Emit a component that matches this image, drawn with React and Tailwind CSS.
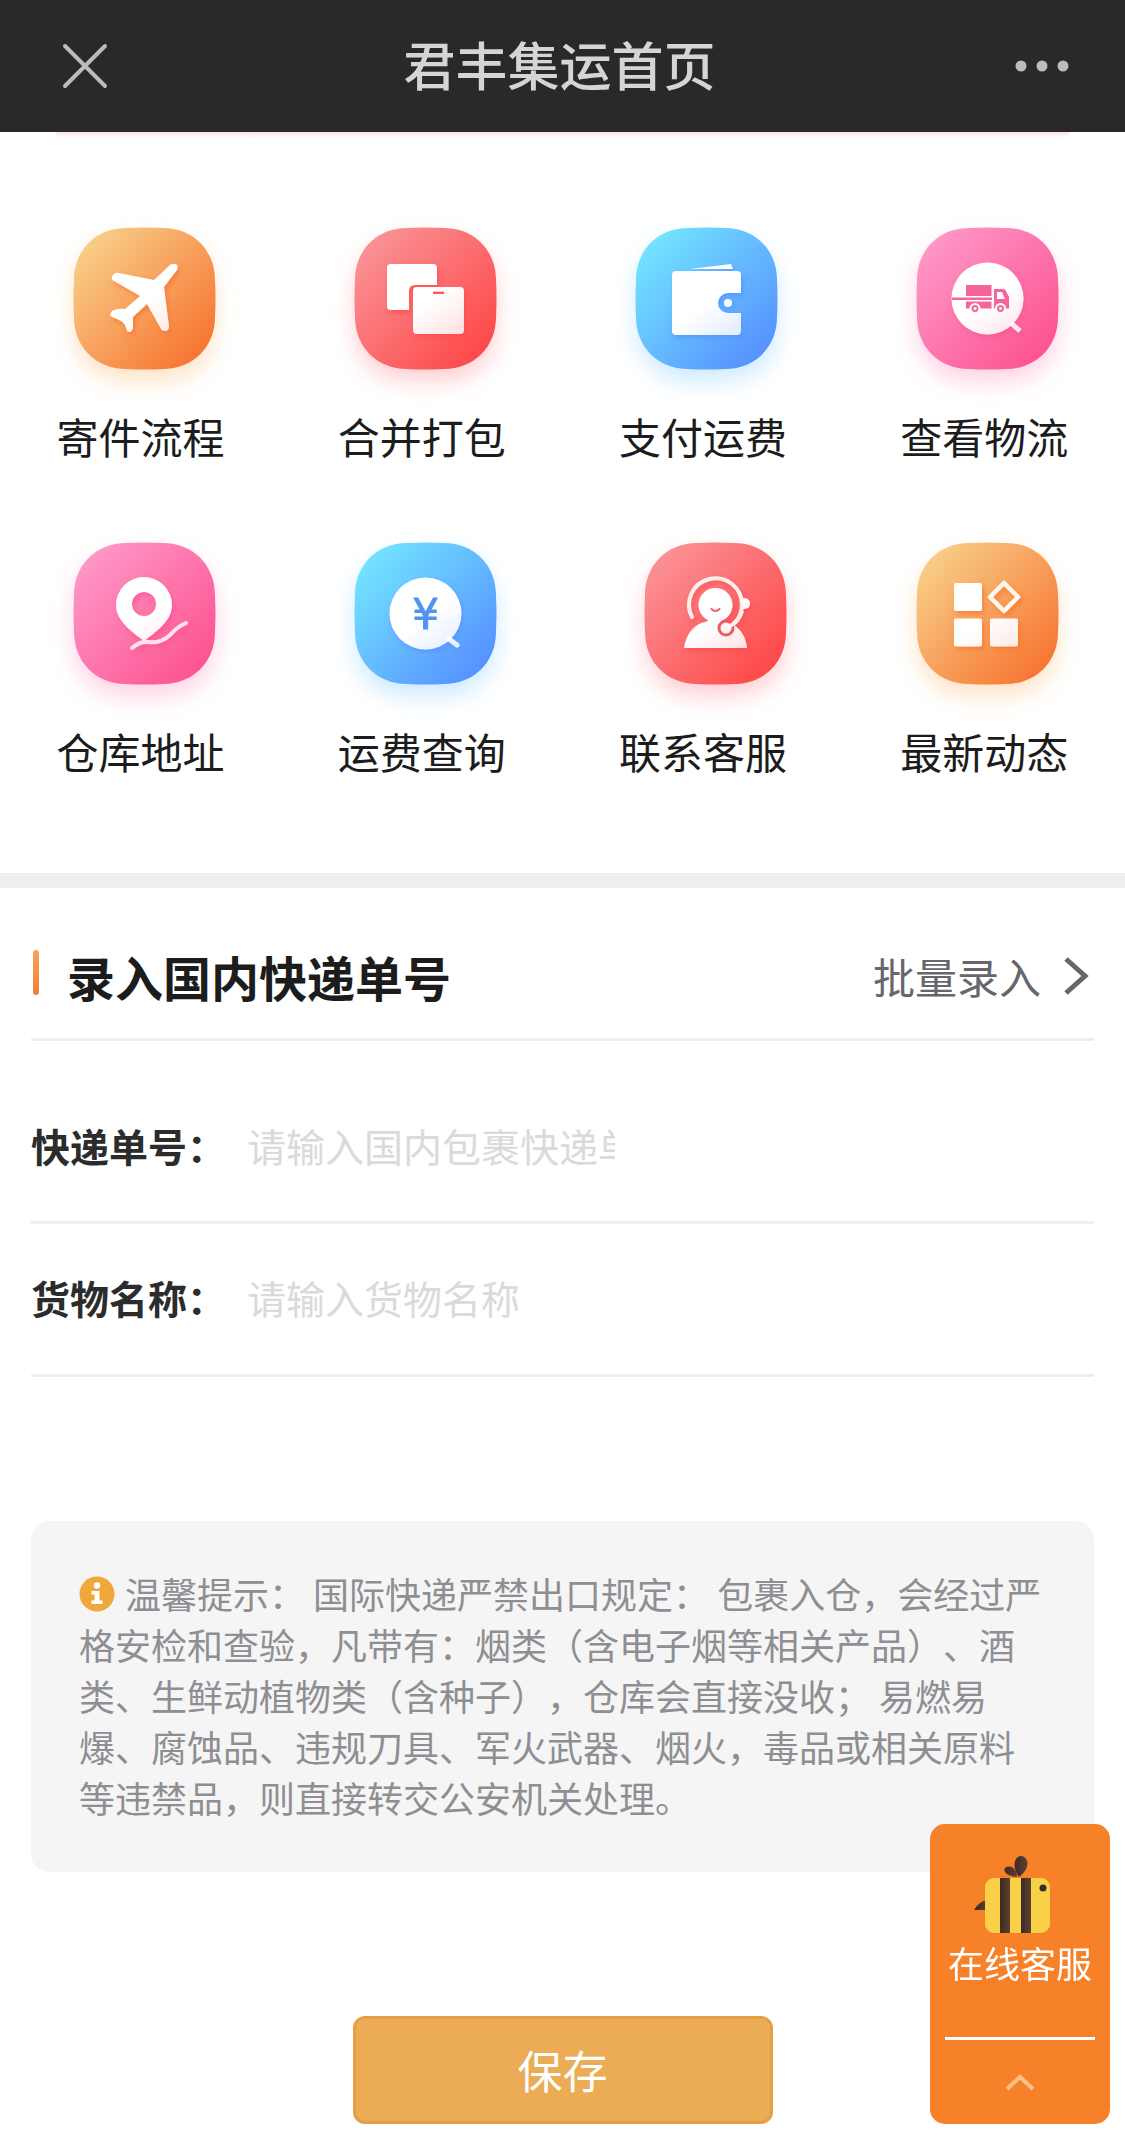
import { useState } from 'react';

const TILE_PATH = 'M0 52C0 22 22 0 52 0Q70.5 -1 89 0C119 0 141 22 141 52Q142 70.5 141 89C141 119 119 141 89 141Q70.5 142 52 141C22 141 0 119 0 89Q-1 70.5 0 52Z';

const THEMES = {
  orange: { from: '#f7cc86', to: '#f76f2c', glow: '#fbb469' },
  red: { from: '#fa9094', to: '#fe4444', glow: '#fd7f86' },
  blue: { from: '#72e2ff', to: '#548cff', glow: '#7cc6ff' },
  pink: { from: '#fd96c6', to: '#fd4f8d', glow: '#fe86b5' },
};

function PlaneGlyph() {
  return (
    <path d="M45 45L80 52L96 37Q99 35 102 36Q105 38 103 42L90 59L95 98Q95 103 91 103Q88 103 87 101L73 76L59 89L59 100Q57 106 53 103Q51 95 47 93Q43 91 38 89Q34 87 38 83Q43 80 51 81L66 68L40 53Q36 51 39 47Q41 44 45 45Z" />
  );
}

function MergeGlyph() {
  return (
    <>
      <path d="M36 36H78Q82 36 82 40V57H60Q54 57 54 63V82H36Q32 82 32 78V40Q32 36 36 36Z" />
      <path fillRule="evenodd" d="M62 59H105Q109 59 109 63V102Q109 106 105 106H62Q58 106 58 102V63Q58 59 62 59ZM78 63.5V66H89V63.5Z" />
    </>
  );
}

function WalletGlyph() {
  return (
    <>
      <path d="M54 41L95 36L97 41Z" />
      <path d="M40 43H101Q105 43 105 47V65H92A10 10 0 0 0 92 85H105V103Q105 107 101 107H40Q36 107 36 103V47Q36 43 40 43Z" />
      <circle cx="92" cy="75" r="4" />
    </>
  );
}

function LogisticsGlyph() {
  return (
    <>
      <path d="M94 95L103 103" fill="none" stroke="#ffe6f0" strokeWidth="5" />
      <circle cx="70.5" cy="70.5" r="36" />
      <g fill="#f4659a">
        <path d="M49 57H74.5V68H49ZM35 69.5H75V72H35ZM49 73.5H74.5V80.5H49Z" />
        <path fillRule="evenodd" d="M77 61H86Q88 61 89 63L92 69V80.5H77ZM80 64V71H88L85 64Z" />
      </g>
      <g fill="#f4659a" stroke="#fff" strokeWidth="2">
        <circle cx="58" cy="80.5" r="4.5" />
        <circle cx="83.5" cy="80.5" r="4.5" />
      </g>
      <circle cx="58" cy="80.5" r="1.5" />
      <circle cx="83.5" cy="80.5" r="1.5" />
    </>
  );
}

function PinGlyph() {
  return (
    <>
      <path fillRule="evenodd" d="M70 98C60 90 42 79 42 62A28 28 0 0 1 98 62C98 79 80 90 70 98ZM70 49A12 12 0 1 0 70 73A12 12 0 1 0 70 49Z" />
      <path d="M58 105Q66 98 74 99Q86 101 96 92Q103 84 112 80" fill="none" stroke="#ffe3ee" strokeWidth="4" strokeLinecap="round" />
    </>
  );
}

function YuanGlyph() {
  return (
    <>
      <path d="M94 96L102 102" fill="none" stroke="#e8f3ff" strokeWidth="5" strokeLinecap="round" />
      <circle cx="70.5" cy="70.5" r="36" />
      <text x="70.5" y="86" textAnchor="middle" fill="#4f94ee" stroke="#4f94ee" strokeWidth="1" fontSize="42" fontFamily="'DejaVu Sans', sans-serif">¥</text>
    </>
  );
}

function ServiceGlyph() {
  return (
    <>
      <path d="M47 74A26.5 26.5 0 1 1 97 62Q96 79 83 84" fill="none" stroke="#ffeeee" strokeWidth="4" strokeLinecap="round" />
      <path d="M98 55Q105 55 105 60.5T98 66Z" />
      <circle cx="70.5" cy="62" r="17" />
      <path d="M39 105C41 90 50 81 60 79Q65 78 63 74H78Q76 78 81 79C92 81 101 91 102 105Z" />
      <path d="M66.5 66Q70.5 70 74.5 66" fill="none" stroke="#f0606c" strokeWidth="2" strokeLinecap="round" />
      <circle cx="81" cy="85" r="8.5" fill="#ee5a60" />
      <path d="M97 68Q94 79 83 84" fill="none" stroke="#ffeeee" strokeWidth="4" />
      <circle cx="81" cy="85" r="5.5" />
    </>
  );
}

function NewsGlyph() {
  return (
    <>
      <rect x="37" y="40" width="28" height="28" rx="2" />
      <rect x="37" y="75.5" width="28" height="28" rx="2" />
      <rect x="73" y="75.5" width="28" height="28" rx="2" />
      <path d="M87 40L101 54L87 68L73 54Z" fill="none" stroke="#fff6ee" strokeWidth="4.5" strokeLinejoin="round" />
    </>
  );
}

const MENU = [
  { id: 'process', label: '寄件流程', theme: 'orange', Glyph: PlaneGlyph, left: 33 },
  { id: 'merge', label: '合并打包', theme: 'red', Glyph: MergeGlyph, left: 33 },
  { id: 'pay', label: '支付运费', theme: 'blue', Glyph: WalletGlyph, left: 33 },
  { id: 'logistics', label: '查看物流', theme: 'pink', Glyph: LogisticsGlyph, left: 33 },
  { id: 'address', label: '仓库地址', theme: 'pink', Glyph: PinGlyph, left: 33 },
  { id: 'price', label: '运费查询', theme: 'blue', Glyph: YuanGlyph, left: 33 },
  { id: 'service', label: '联系客服', theme: 'red', Glyph: ServiceGlyph, left: 42 },
  { id: 'news', label: '最新动态', theme: 'orange', Glyph: NewsGlyph, left: 33 },
];

function MenuIcon({ id, theme, Glyph, left }) {
  const { from, to, glow } = THEMES[theme];
  return (
    <svg viewBox="0 0 200 194" className="h-[194px] w-[200px] overflow-visible" aria-hidden="true">
      <defs>
        <linearGradient id={`tile-${id}`} x1="0" y1="0.05" x2="0.95" y2="0.95">
          <stop offset="0.1" stopColor={from} />
          <stop offset="1" stopColor={to} />
        </linearGradient>
        <linearGradient id={`glyph-${id}`} gradientUnits="userSpaceOnUse" x1="55" y1="45" x2="98" y2="108">
          <stop offset="0.45" stopColor="#fff" />
          <stop offset="1" stopColor="#fff" stopOpacity="0.78" />
        </linearGradient>
        <filter id={`glow-${id}`} x="-30%" y="-30%" width="160%" height="160%">
          <feGaussianBlur stdDeviation="11" />
        </filter>
        <filter id={`drop-${id}`} x="-20%" y="-20%" width="140%" height="140%">
          <feDropShadow dx="2" dy="3" stdDeviation="2.5" floodColor={to} floodOpacity="0.7" />
        </filter>
      </defs>
      <g transform={`translate(${left} 16)`}>
        <path d={TILE_PATH} fill={glow} opacity="0.36" filter={`url(#glow-${id})`} transform="translate(0 12)" />
        <path d={TILE_PATH} fill={`url(#tile-${id})`} />
        <g fill={`url(#glyph-${id})`} filter={`url(#drop-${id})`}>
          <Glyph />
        </g>
      </g>
    </svg>
  );
}

function BeeIcon() {
  return (
    <svg viewBox="0 0 76 77" className="mr-4 h-[77px] w-[76px]" aria-hidden="true">
      <defs>
        <linearGradient id="bee-dark" x1="0" y1="0" x2="1" y2="0">
          <stop offset="0" stopColor="#3c2a24" />
          <stop offset="1" stopColor="#5d4030" />
        </linearGradient>
      </defs>
      <path d="M45 21C37 10 41 0 47 0C55 1 57 12 45 21Z" fill="url(#bee-dark)" />
      <path d="M43 21C32 20 29 15 31 12C37 8 43 13 43 21Z" fill="url(#bee-dark)" />
      <path d="M0 54Q5 45 14 44V54Z" fill="url(#bee-dark)" />
      <rect x="11" y="22" width="65" height="55" rx="9" fill="#f8d148" />
      <rect x="26" y="22" width="10" height="55" fill="url(#bee-dark)" />
      <rect x="47" y="22" width="10" height="55" fill="url(#bee-dark)" />
      <circle cx="69" cy="32" r="3.5" fill="#3c2a24" />
    </svg>
  );
}

function Field({ id, label, placeholder, value, onChange, className }) {
  return (
    <div className={`flex items-center border-b-[3px] border-[#eeeeee] ${className}`}>
      <label htmlFor={id} className="w-[216px] shrink-0 text-[39px] leading-[60px] font-bold text-[#2c2c2c]">
        {label}
      </label>
      <input id={id} type="text" value={value} placeholder={placeholder}
        onChange={(e) => onChange(e.target.value)}
        className="h-[60px] w-[368px] bg-transparent text-[39px] leading-[60px] text-[#222222] outline-none placeholder:text-[#dadada]" />
    </div>
  );
}

export default function App() {
  const [trackingNo, setTrackingNo] = useState('');
  const [goodsName, setGoodsName] = useState('');

  return (
    <div lang="zh-CN" className="min-h-screen bg-white font-['Noto_Sans_CJK_SC',sans-serif] text-[#1c1c1c] [text-spacing-trim:space-all]">
      {/* Title bar */}
      <header className="flex h-[132px] items-center justify-between bg-[#2a2829] pr-[56px] pl-[60px]">
        <button type="button" aria-label="关闭" className="flex w-[50px] justify-start">
          <svg viewBox="0 0 50 50" className="size-[50px]" fill="none" stroke="#bdbcbc" strokeWidth="4" strokeLinecap="round">
            <path d="M5 5L45 45M45 5L5 45" />
          </svg>
        </button>
        <h1 className="pb-1 text-[52px] leading-[72px] font-medium text-[#d6d5d5]">君丰集运首页</h1>
        <button type="button" aria-label="更多" className="flex w-[60px] justify-end">
          <svg viewBox="0 0 56 12" className="h-3 w-14 shrink-0" fill="#bdbcbc">
            <circle cx="8" cy="6" r="5.5" />
            <circle cx="29" cy="6" r="5.5" />
            <circle cx="50" cy="6" r="5.5" />
          </svg>
        </button>
      </header>
      <div className="mx-14 h-[6px] bg-linear-to-b from-[#fde3e8] to-white" />

      {/* Shortcuts */}
      <nav className="grid grid-cols-4 gap-y-[61px] pt-[74px] pb-[92px]">
        {MENU.map((item) => (
          <a key={item.id} href={`#${item.id}`} className="flex flex-col items-center">
            <MenuIcon {...item} />
            <span className="text-[42px] leading-[60px]">{item.label}</span>
          </a>
        ))}
      </nav>

      <div className="h-[15px] bg-[#eeeeee]" />

      {/* Parcel form */}
      <form className="px-[31px] pb-[13px]" onSubmit={(e) => e.preventDefault()}>
        <div className="flex h-[153px] items-start justify-between border-b-[3px] border-[#eeeeee] pt-[58px]">
          <div className="flex items-start pl-0.5">
            <span className="mt-1 mr-[28px] h-[45px] w-[6px] rounded-sm bg-linear-to-b from-[#f6a45c] to-[#f37b35]" />
            <h2 className="text-[48px] leading-[60px] font-bold">录入国内快递单号</h2>
          </div>
          <a href="#batch" className="flex items-center text-[42px] leading-[60px] text-[#66666c]">
            批量录入
            <svg viewBox="0 0 26 38" className="mr-[5px] ml-[22px] h-[38px] w-[26px]" fill="none" stroke="#66666c" strokeWidth="5">
              <path d="M3 2L22 19L3 36" />
            </svg>
          </a>
        </div>

        <Field id="trackingNo" label="快递单号：" placeholder="请输入国内包裹快递单号"
          value={trackingNo} onChange={setTrackingNo} className="h-[183px] pt-7" />
        <Field id="goodsName" label="货物名称：" placeholder="请输入货物名称"
          value={goodsName} onChange={setGoodsName} className="h-[153px] pb-1" />

        <p className="mt-36 rounded-[18px] bg-[#f5f5f5] px-12 pt-[47px] pb-[49px] text-[36px] leading-[51px] text-[#8e8e93]">
          <svg viewBox="0 0 36 36" className="mr-[10px] inline-block size-9 align-[-3px]" aria-hidden="true">
            <circle cx="18" cy="18" r="17.5" fill="#f0a83c" />
            <circle cx="18" cy="9.5" r="3.2" fill="#fff" />
            <path d="M12.5 15H20.5V24.5H23.5V28H12.5V24.5H15.5V18.5H12.5Z" fill="#fff" />
          </svg>
          温馨提示： 国际快递严禁出口规定： 包裹入仓，会经过严格安检和查验，凡带有：烟类（含电子烟等相关产品）、酒类、生鲜动植物类（含种子），仓库会直接没收； 易燃易爆、腐蚀品、违规刀具、军火武器、烟火，毒品或相关原料等违禁品，则直接转交公安机关处理。
        </p>

        <button type="submit"
          className="mx-auto mt-36 block h-[108px] w-[420px] rounded-xl border-[3px] border-[#e5a046] bg-[#ebac55] text-[45px] leading-[60px] text-white">
          保存
        </button>
      </form>

      {/* Floating customer service */}
      <aside className="fixed right-[15px] bottom-[13px] flex h-[300px] w-[180px] flex-col items-center rounded-[15px] bg-[#f78128] px-[15px] pt-8">
        <a href="#chat" className="flex flex-col items-center text-[36px] leading-[51px] whitespace-nowrap text-white">
          <BeeIcon />
          <span className="mt-1">在线客服</span>
        </a>
        <button type="button" aria-label="展开" className="mt-[49px] flex w-full flex-1 items-center justify-center border-t-[3px] border-white">
          <svg viewBox="0 0 30 18" className="h-[18px] w-[30px]" fill="none" stroke="#fcc08d" strokeWidth="4">
            <path d="M2 16L15 4L28 16" />
          </svg>
        </button>
      </aside>
    </div>
  );
}
